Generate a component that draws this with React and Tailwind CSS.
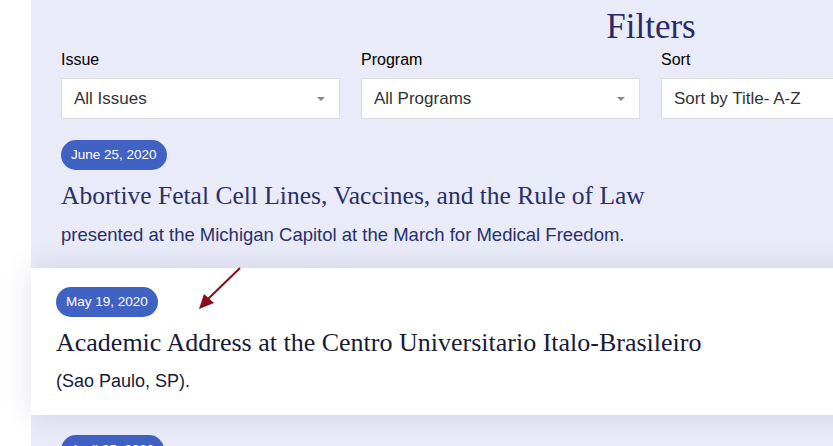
import React from "react";

const serif = { fontFamily: '"Liberation Serif", "DejaVu Serif", serif' };

function Select({ label, value }) {
  return (
    <div className="flex flex-col w-[279px] shrink-0">
      <div className="text-[16px] leading-[20px] text-black mb-[8px]">{label}</div>
      <div className="h-[41px] bg-white border border-[#dcdde3] flex items-center justify-between pl-[12px] pr-[14px]">
        <span className="text-[17px] text-[#333]">{value}</span>
        <span className="w-0 h-0 border-l-[4px] border-r-[4px] border-t-[4px] border-l-transparent border-r-transparent border-t-[#888]" />
      </div>
    </div>
  );
}

export default function App() {
  return (
    <div className="relative w-[833px] h-[446px] overflow-hidden bg-white" style={{ fontFamily: '"Liberation Sans", Arial, sans-serif' }}>
      <div className="ml-[31px] w-[1240px] bg-[#eaebf8] h-full">
        <div className="text-center text-[35px] leading-[40px] pt-[7px] text-[#272a66]" style={serif}>Filters</div>
        <div className="flex gap-[21px] pl-[30px] mt-[3px]">
          <Select label="Issue" value="All Issues" />
          <Select label="Program" value="All Programs" />
          <Select label="Sort" value="Sort by Title- A-Z" />
        </div>
        <div className="pl-[30px] pt-[21px] pb-[22px]">
          <span className="inline-flex items-center h-[30px] px-[10px] rounded-full bg-[#4062c2] text-white text-[13.5px]">June 25, 2020</span>
          <div className="mt-[11px] text-[25.5px] leading-[30px] text-[#28306a]" style={serif}>Abortive Fetal Cell Lines, Vaccines, and the Rule of Law</div>
          <div className="mt-[13px] text-[18.5px] leading-[22px] text-[#27306b]">presented at the Michigan Capitol at the March for Medical Freedom.</div>
        </div>
        <div className="relative bg-white pl-[25px] pt-[19px] h-[147px] shadow-[0_0_28px_rgba(40,40,90,0.13)]">
          <span className="inline-flex items-center h-[30px] px-[10px] rounded-full bg-[#4062c2] text-white text-[13.5px]">May 19, 2020</span>
          <div className="mt-[11px] text-[26px] leading-[30px] text-[#161a3c]" style={serif}>Academic Address at the Centro Universitario Italo-Brasileiro</div>
          <div className="mt-[12px] text-[18px] leading-[22px] text-[#161a3c]">(Sao Paulo, SP).</div>
        </div>
        <div className="pl-[30px] pt-[20px]">
          <span className="inline-flex items-center h-[30px] px-[10px] rounded-full bg-[#4062c2] text-white text-[13.5px]">April 25, 2020</span>
        </div>
      </div>
      <svg className="absolute left-[195px] top-[265px]" width="50" height="48" viewBox="0 0 50 48">
        <line x1="45" y1="3" x2="13" y2="34" stroke="#8a0a1e" strokeWidth="2" />
        <polygon points="4,44 9,29 19,38" fill="#8a0a1e" />
      </svg>
    </div>
  );
}
